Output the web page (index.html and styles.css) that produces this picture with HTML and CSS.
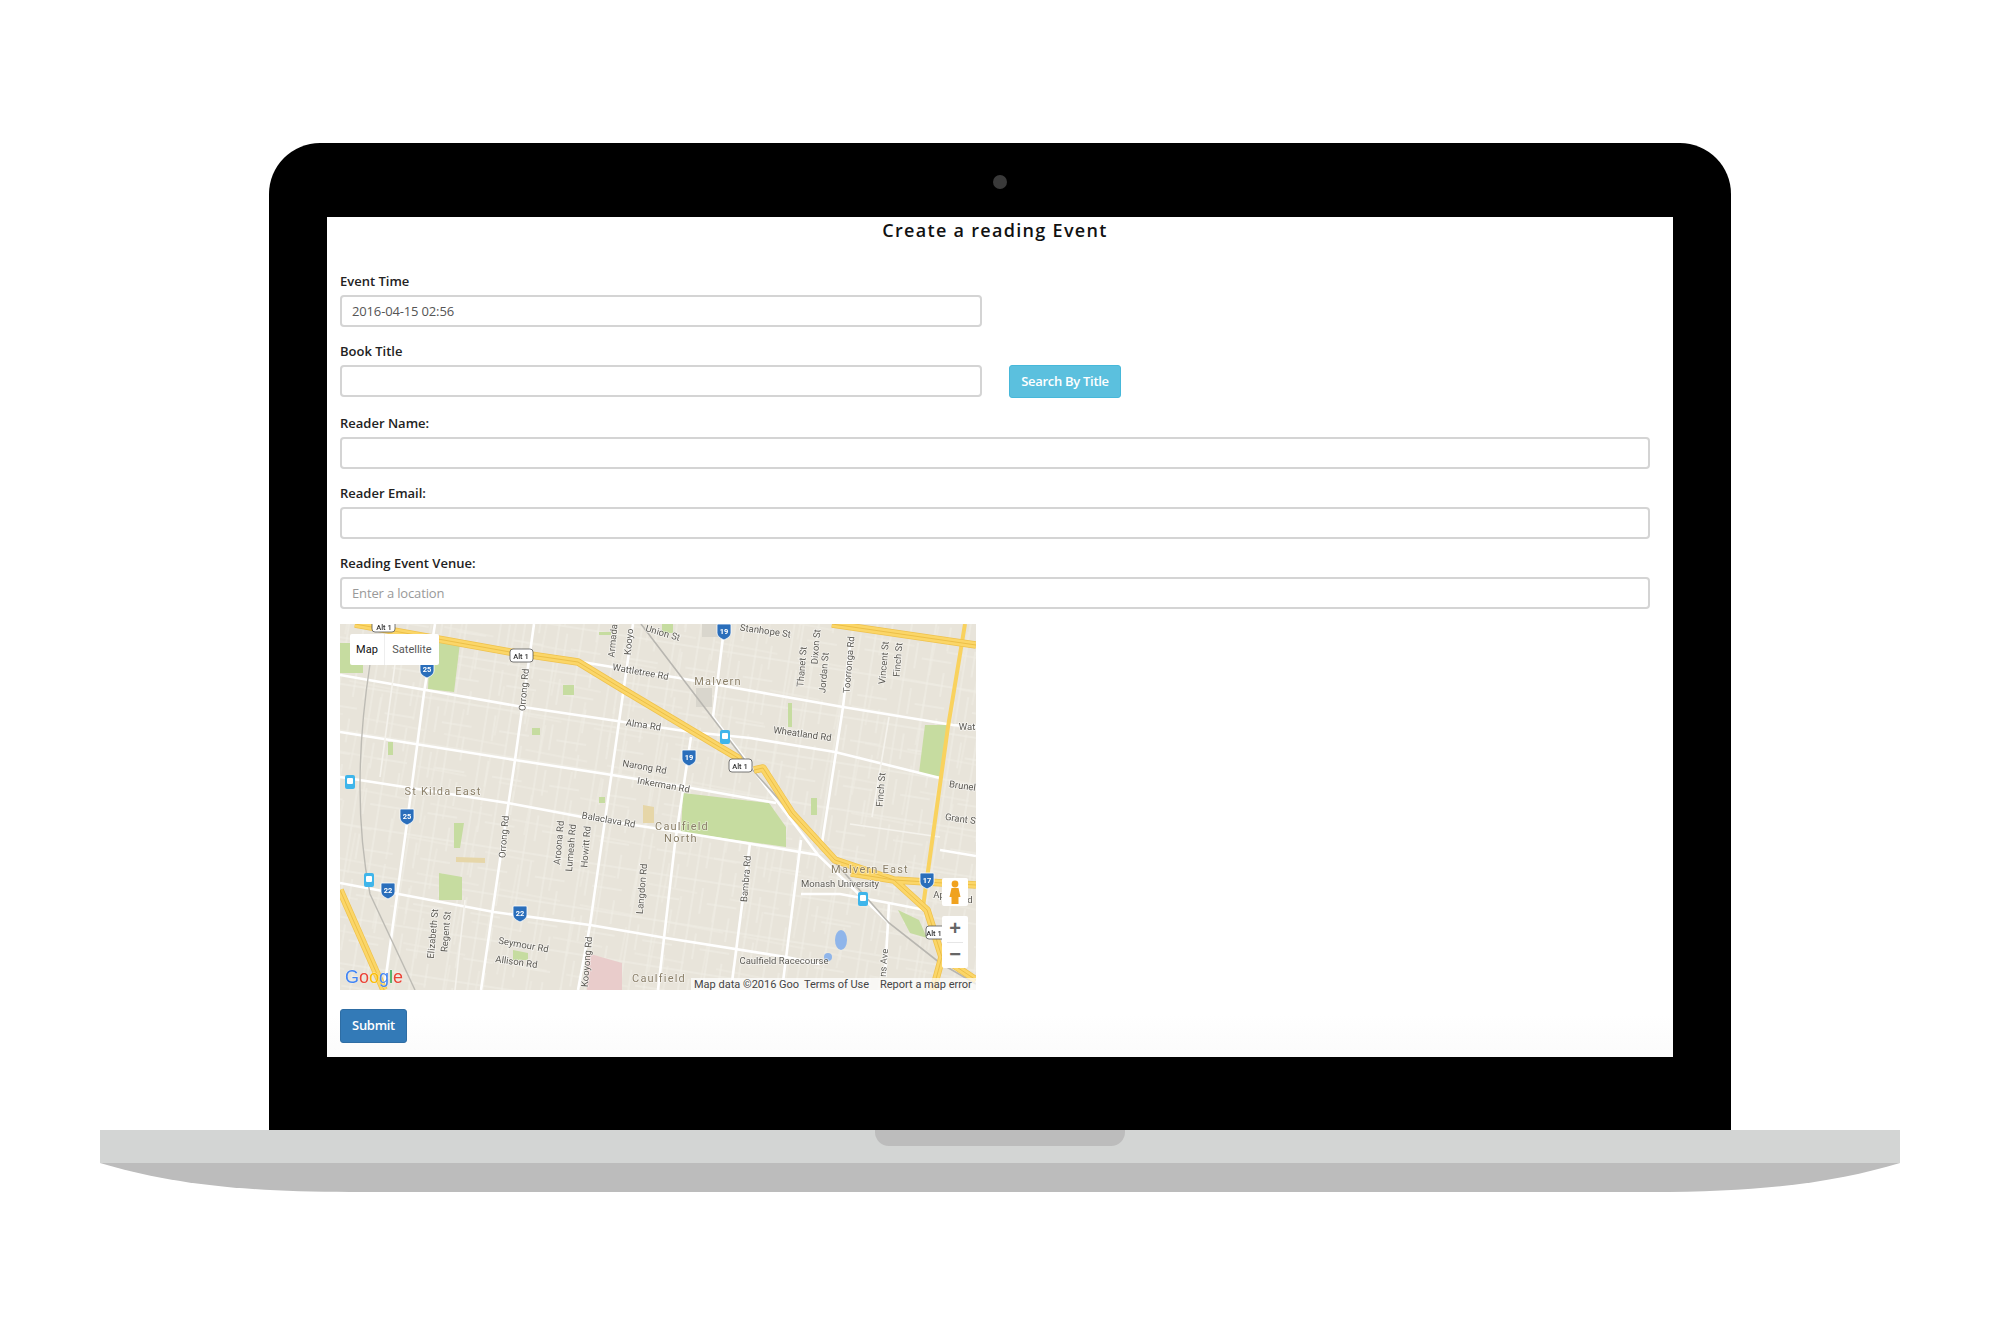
FILE: index.html
```html
<!DOCTYPE html>
<html lang="en">
<head>
<meta charset="UTF-8">
<title>Create a reading Event</title>
<link rel="stylesheet" href="styles.css">
</head>
<body>
<div class="laptop">
  <div class="bezel">
    <span class="camera"></span>
    <div class="screen">
      <h1 class="page-title">Create a reading Event</h1>
      <form class="event-form">
        <div class="form-group">
          <label>Event Time</label>
          <input class="form-control short" type="text" value="2016-04-15 02:56">
        </div>
        <div class="form-group">
          <label>Book Title</label>
          <div class="search-row">
            <input class="form-control short" type="text">
            <button class="btn btn-info" type="button">Search By Title</button>
          </div>
        </div>
        <div class="form-group">
          <label>Reader Name:</label>
          <input class="form-control" type="text">
        </div>
        <div class="form-group">
          <label>Reader Email:</label>
          <input class="form-control" type="text">
        </div>
        <div class="form-group venue">
          <label>Reading Event Venue:</label>
          <input class="form-control" type="text" placeholder="Enter a location">
        </div>

        <div class="map">
          <svg class="map-canvas" width="636" height="366" viewBox="0 0 636 366">
            <defs>
              <pattern id="streets" width="58" height="46" patternUnits="userSpaceOnUse" patternTransform="rotate(9)">
                <path d="M9 0V46M24 0V24M43 0V46M52 20V46M0 13H58M0 35H30" fill="none" stroke="#f1efe7" stroke-width="1"/>
              </pattern>
              <pattern id="streets-b" width="83" height="71" patternUnits="userSpaceOnUse" patternTransform="rotate(11) translate(20 30)">
                <path d="M17 0V40M35 30V71M70 0V50M0 24H50M20 58H83" fill="none" stroke="#efece3" stroke-width="1"/>
              </pattern>
              <path id="shield" d="M-6 -7H6Q7 -7 7 -6V2Q7 6 0 9Q-7 6 -7 2V-6Q-7 -7 -6 -7Z" fill="#2a6ebb" stroke="#fff" stroke-width=".8"/>
              <g id="train">
                <rect x="-5" y="-7" width="10" height="14" rx="2" fill="#3fb5ea"/>
                <rect x="-3" y="-4" width="6" height="6" rx="1" fill="#fff"/>
              </g>
              <path id="freeway" d="M15 0L170 28L238 38L284 66L351 106L398 134L404 146M414 146L423 144L452 189L495 236L554 256L587 286L602 333L636 356M511 249L554 256L636 261M492 0L636 21M0 266L44 366M602 333L593 366"/>
            </defs>

            <rect width="636" height="366" fill="#e8e4da"/>
            <rect width="636" height="366" fill="url(#streets)"/>
            <rect width="636" height="366" fill="url(#streets-b)"/>

            <!-- parks and land use -->
            <g fill="#c6dca0">
              <path d="M343 169L429 179L446 203V223L341 208Z"/>
              <path d="M90 19H120L114 68L88 65Z"/>
              <path d="M0 19H23V49H0Z"/>
              <path d="M585 101H608L600 153L579 149Z"/>
              <path d="M99 249L122 253V276H99Z"/>
              <path d="M114 199H124L120 224H114Z"/>
              <path d="M558 286L579 296L587 314L570 309Z"/>
              <path d="M223 61H234V71H223Z"/>
              <path d="M48 118H53V131H48Z"/>
              <path d="M192 104H200V111H192Z"/>
              <path d="M448 79H452V103H448Z"/>
              <path d="M471 174H477V191H471Z"/>
              <path d="M259 173H265V179H259Z"/>
              <path d="M322 0H333V9H322Z"/>
              <path d="M173 326L188 329V336H173Z"/>
              <path d="M259 8H271V11H259Z"/>
            </g>
            <path d="M247 329L282 339V366H247Z" fill="#e9cccb"/>
            <path d="M303 181L314 183V199H303Z" fill="#e6d6a8"/>
            <path d="M116 233L145 234V239L116 238Z" fill="#e6d6a8"/>
            <path d="M356 64H372V83H356ZM362 0H379V13H362Z" fill="#d9d6cd"/>
            <ellipse cx="501" cy="316" rx="6" ry="10" fill="#8fb5ea"/>
            <circle cx="488" cy="333" r="4" fill="#8fb5ea"/>

            <!-- roads -->
            <g fill="none" stroke="#fff" stroke-width="2.6">
              <path d="M0 51L183 83L284 98L351 108L410 114L495 128L600 154"/>
              <path d="M242 38L339 54L503 83L613 101L636 103"/>
              <path d="M0 108L175 136L272 151L351 164L436 179"/>
              <path d="M0 153L168 179L242 193L339 208L478 231"/>
              <path d="M0 259L154 288L250 301L326 314L446 333L480 340"/>
              <path d="M194 0L175 136L160 236L141 366"/>
              <path d="M95 0L84 69L67 199L44 366"/>
              <path d="M293 0L276 119L250 301L238 366"/>
              <path d="M383 13L373 93M351 113L335 219L318 366"/>
              <path d="M511 13L503 83L482 219"/>
              <path d="M410 219L391 366"/>
              <path d="M461 216L442 366"/>
              <path d="M549 279L545 353"/>
              <path d="M373 93L478 231L549 299"/>
              <path d="M461 270H500L549 279L585 286"/>
              <path d="M600 226L636 232"/>
            </g>
            <g fill="none" stroke="#f5f3ed" stroke-width="1.6">
              <path d="M549 93L532 193"/>
              <path d="M55 40L40 153"/>
              <path d="M510 200L600 213"/>
              <path d="M125 276L115 366"/>
            </g>
            <path d="M301 0L410 143L549 299L600 339L636 360" fill="none" stroke="#b8b6b0" stroke-width="1.6"/>
            <path d="M30 40Q10 170 30 270L75 366" fill="none" stroke="#bdbbb4" stroke-width="1.4"/>

            <path d="M625 0L608 103L583 283" fill="none" stroke="#f9d25e" stroke-width="4"/>
            <g fill="none" stroke-linejoin="round">
              <use href="#freeway" stroke="#efc24d" stroke-width="7.5"/>
              <use href="#freeway" stroke="#fbd668" stroke-width="6"/>
              <use href="#freeway" stroke="#ecbf48" stroke-width="1"/>
            </g>

            <!-- shields -->
            <g class="alt-shields">
              <rect x="32" y="-4" width="23" height="12" rx="3"/><text x="44" y="6">Alt 1</text>
              <rect x="170" y="25" width="23" height="13" rx="3"/><text x="181" y="35">Alt 1</text>
              <rect x="389" y="135" width="23" height="13" rx="3"/><text x="400" y="145">Alt 1</text>
              <rect x="586" y="302" width="23" height="13" rx="3"/><text x="594" y="312">Alt 1</text>
            </g>
            <g class="hwy">
              <use href="#shield" x="87" y="45"/><text x="87" y="46">25</text>
              <use href="#shield" x="67" y="192"/><text x="67" y="193">25</text>
              <use href="#shield" x="384" y="7"/><text x="384" y="8">19</text>
              <use href="#shield" x="349" y="133"/><text x="349" y="134">19</text>
              <use href="#shield" x="48" y="266"/><text x="48" y="267">22</text>
              <use href="#shield" x="180" y="289"/><text x="180" y="290">22</text>
              <use href="#shield" x="587" y="256"/><text x="587" y="257">17</text>
            </g>
            <use href="#train" x="10" y="158"/>
            <use href="#train" x="385" y="113"/>
            <use href="#train" x="29" y="256"/>
            <use href="#train" x="523" y="275"/>

            <!-- road labels -->
            <g class="road-label">
              <text transform="translate(425 10) rotate(8)">Stanhope St</text>
              <text transform="translate(322 12) rotate(16)">Union St</text>
              <text transform="translate(276 17) rotate(-85)">Armada</text>
              <text transform="translate(292 18) rotate(-85)">Kooyo</text>
              <text transform="translate(465 43) rotate(-85)">Thanet St</text>
              <text transform="translate(479 23) rotate(-85)">Dixon St</text>
              <text transform="translate(487 49) rotate(-85)">Jordan St</text>
              <text transform="translate(512 41) rotate(-85)">Toorronga Rd</text>
              <text transform="translate(547 39) rotate(-85)">Vincent St</text>
              <text transform="translate(561 36) rotate(-85)">Finch St</text>
              <text transform="translate(300 51) rotate(10)">Wattletree Rd</text>
              <text transform="translate(187 66) rotate(-85)">Orrong Rd</text>
              <text transform="translate(303 104) rotate(8)">Alma Rd</text>
              <text transform="translate(462 113) rotate(8)">Wheatland Rd</text>
              <text transform="translate(627 106)">Wat</text>
              <text transform="translate(304 146) rotate(10)">Narong Rd</text>
              <text transform="translate(323 164) rotate(10)">Inkerman Rd</text>
              <text transform="translate(622 165) rotate(8)">Brunel</text>
              <text transform="translate(620 198) rotate(8)">Grant S</text>
              <text transform="translate(544 166) rotate(-85)">Finch St</text>
              <text transform="translate(268 199) rotate(10)">Balaclava Rd</text>
              <text transform="translate(167 213) rotate(-85)">Orrong Rd</text>
              <text transform="translate(222 219) rotate(-85)">Aroona Rd</text>
              <text transform="translate(234 224) rotate(-85)">Lumeah Rd</text>
              <text transform="translate(249 223) rotate(-85)">Howitt Rd</text>
              <text transform="translate(305 265) rotate(-85)">Langdon Rd</text>
              <text transform="translate(409 255) rotate(-85)">Bambra Rd</text>
              <text transform="translate(500 263)">Monash University</text>
              <text transform="translate(96 310) rotate(-85)">Elizabeth St</text>
              <text transform="translate(109 308) rotate(-85)">Regent St</text>
              <text transform="translate(183 324) rotate(10)">Seymour Rd</text>
              <text transform="translate(176 341) rotate(8)">Allison Rd</text>
              <text transform="translate(250 338) rotate(-85)">Kooyong Rd</text>
              <text transform="translate(444 340)">Caulfield Racecourse</text>
              <text transform="translate(547 339) rotate(-85)">ns Ave</text>
              <text transform="translate(599 274)">Ap</text>
              <text transform="translate(630 279)">d</text>
            </g>
            <g class="area-label">
              <text x="378" y="61">Malvern</text>
              <text x="103" y="171">St Kilda East</text>
              <text x="342" y="206">Caulfield</text>
              <text x="341" y="218">North</text>
              <text x="530" y="249">Malvern East</text>
              <text x="319" y="358">Caulfield</text>
            </g>

            <text class="google-logo" x="5" y="359"><tspan fill="#4285f4">G</tspan><tspan fill="#ea4335">o</tspan><tspan fill="#fbbc05">o</tspan><tspan fill="#4285f4">g</tspan><tspan fill="#34a853">l</tspan><tspan fill="#ea4335">e</tspan></text>
          </svg>

          <div class="map-type">
            <span class="map-type-btn current">Map</span>
            <span class="map-type-btn">Satellite</span>
          </div>
          <div class="pegman">
            <svg width="12" height="24" viewBox="0 0 12 24"><circle cx="6" cy="4" r="3.4" fill="#f0a21e"/><path d="M2.5 8H9.5L11.5 17H9.5V24H2.5V17H.5Z" fill="#f0a21e"/></svg>
          </div>
          <div class="zoom-ctl">
            <span class="zoom-btn">+</span>
            <span class="zoom-sep"></span>
            <span class="zoom-btn">&minus;</span>
          </div>
          <div class="attribution">
            <span class="attr-data">Map data &copy;2016 Goo</span>
            <span class="attr-terms">Terms of Use</span>
            <span>Report a map error</span>
          </div>
        </div>

        <button class="btn btn-primary" type="button">Submit</button>
      </form>
    </div>
  </div>
  <div class="base">
    <span class="notch"></span>
  </div>
  <svg class="base-lip" width="1800" height="29" viewBox="0 0 1800 29">
    <path d="M0 0H1800C1740 18 1670 29 1550 29H250C130 29 60 18 0 0Z" fill="#bcbcbc"/>
  </svg>
</div>
</body>
</html>
```

FILE: styles.css
```css
body {
  margin: 0;
  background-color: #fff;
  font-family: "Open Sans", sans-serif;
}

.laptop {
  display: flex;
  flex-direction: column;
  align-items: center;
  padding-top: 143px;
}

.bezel {
  position: relative;
  width: 1346px;
  height: 840px;
  padding: 74px 58px 73px;
  background-color: #000;
  border-radius: 51px 51px 0 0;
}

.camera {
  position: absolute;
  top: 32px;
  left: 724px;
  width: 14px;
  height: 14px;
  border-radius: 50%;
  background-color: #3a3a3a;
}

.screen {
  height: 840px;
  box-sizing: border-box;
  padding: 0 23px 0 13px;
  background: linear-gradient(#fff 95%, #fbfbfb);
}

.page-title {
  margin: 0 0 28px;
  font-size: 18px;
  line-height: 26px;
  font-weight: 600;
  letter-spacing: 1.3px;
  text-align: center;
  color: #111;
}

.form-group {
  margin-bottom: 14.25px;
}

.form-group.venue {
  margin-bottom: 15px;
}

.form-group label {
  display: block;
  margin-bottom: 4px;
  font-size: 13px;
  line-height: 20px;
  font-weight: 600;
  color: #222;
}

.form-control {
  display: block;
  box-sizing: border-box;
  width: 100%;
  height: 32px;
  padding: 0 10px;
  font-family: "Open Sans", sans-serif;
  font-size: 13px;
  letter-spacing: -0.15px;
  color: #555;
  background-color: #fff;
  border: 2px solid #d4d4d4;
  border-radius: 4px;
}

.form-control::placeholder {
  color: #999;
}

.form-control.short {
  width: 642px;
}

.search-row {
  display: flex;
  gap: 27px;
}

.btn {
  box-sizing: border-box;
  padding: 0 0 2px;
  font-family: "Open Sans", sans-serif;
  font-size: 13px;
  font-weight: 600;
  letter-spacing: -0.3px;
  color: #fff;
  border-radius: 3px;
  border: 1px solid transparent;
}

.btn-info {
  width: 112px;
  height: 33px;
  background-color: #5bc0de;
  border-color: #46b8da;
}

.btn-primary {
  display: block;
  width: 67px;
  height: 34px;
  background-color: #337ab7;
  border-color: #2e6da4;
}

.map {
  position: relative;
  width: 636px;
  height: 366px;
  margin-bottom: 19px;
  overflow: hidden;
  font-family: Roboto, sans-serif;
}

.map-canvas {
  display: block;
  filter: blur(0.4px);
}

.alt-shields rect {
  fill: #fff;
  stroke: #555;
  stroke-width: 0.8;
}

.alt-shields text {
  font-size: 7.5px;
  font-weight: 500;
  fill: #333;
  text-anchor: middle;
}

.hwy text {
  font-size: 7.5px;
  font-weight: 700;
  fill: #fff;
  text-anchor: middle;
  dominant-baseline: middle;
}

.road-label text {
  font-size: 9.5px;
  fill: #5c5a54;
  text-anchor: middle;
  stroke: rgba(255, 255, 255, 0.6);
  stroke-width: 1.5px;
  paint-order: stroke;
}

.area-label text {
  font-size: 11px;
  letter-spacing: 1.2px;
  fill: #8a7f68;
  text-anchor: middle;
  stroke: rgba(255, 255, 255, 0.5);
  stroke-width: 1.5px;
  paint-order: stroke;
}

.google-logo {
  font-family: "Liberation Sans", sans-serif;
  font-size: 18px;
  stroke: #fff;
  stroke-width: 0.3px;
  paint-order: stroke;
}

.map-type {
  position: absolute;
  top: 10px;
  left: 10px;
  display: flex;
  width: 89px;
  height: 31px;
  background-color: #fff;
  border-radius: 2px;
  font-size: 11px;
  line-height: 31px;
  text-align: center;
  color: #565656;
}

.map-type-btn {
  flex: 1 1 auto;
}

.map-type-btn.current {
  flex: 0 0 34px;
  border-right: 1px solid #eee;
  color: #111;
}

.pegman {
  position: absolute;
  top: 254px;
  left: 602px;
  display: flex;
  align-items: center;
  justify-content: center;
  width: 26px;
  height: 28px;
  background-color: #fff;
  border-radius: 2px;
}

.zoom-ctl {
  position: absolute;
  top: 292px;
  left: 602px;
  display: flex;
  flex-direction: column;
  align-items: center;
  width: 26px;
  height: 52px;
  background-color: #fff;
  border-radius: 2px;
}

.zoom-btn {
  height: 26px;
  font-family: "Liberation Sans", sans-serif;
  font-size: 20px;
  font-weight: 700;
  line-height: 25px;
  color: #666;
}

.zoom-sep {
  width: 16px;
  height: 1px;
  margin-bottom: -1px;
  background-color: #e6e6e6;
}

.attribution {
  position: absolute;
  right: 0;
  bottom: 0;
  display: flex;
  box-sizing: border-box;
  width: 285px;
  height: 12px;
  padding-left: 3px;
  background-color: rgba(255, 255, 255, 0.7);
  font-size: 11px;
  line-height: 13px;
  color: #444;
  white-space: nowrap;
}

.attr-data {
  width: 110px;
  overflow: hidden;
}

.attr-terms {
  width: 76px;
}

.base {
  position: relative;
  width: 1800px;
  height: 33px;
  background-color: #d3d5d4;
}

.notch {
  position: absolute;
  top: 0;
  left: 775px;
  width: 250px;
  height: 16px;
  background-color: #bcbcbc;
  border-radius: 0 0 14px 14px;
}

.base-lip {
  display: block;
}
```
